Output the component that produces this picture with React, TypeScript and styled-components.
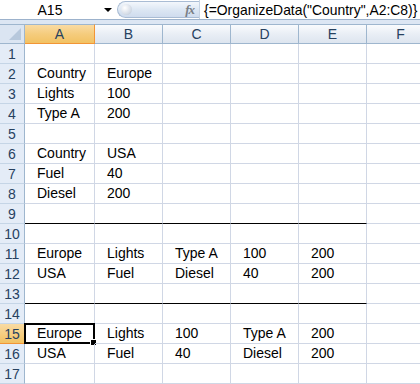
import React from "react";
import styled, { createGlobalStyle, css } from "styled-components";

const GlobalStyle = createGlobalStyle`
  html, body { margin: 0; padding: 0; background: #ffffff; }
  body { font-family: "Liberation Sans", Arial, sans-serif; }
`;

const Sheet = styled.div`
  width: 420px;
  height: 384px;
  overflow: hidden;
  background: #ffffff;
  display: flex;
  flex-direction: column;
`;

const FormulaBar = styled.div`
  display: flex;
  align-items: center;
  height: 19px;
  flex: none;
  background: #ffffff;
  border-bottom: 1px solid #9cb2cc;
`;

const NameBox = styled.div`
  width: 117px;
  height: 19px;
  flex: none;
  display: flex;
  align-items: center;
  font-size: 14px;
  color: #000;
`;

const NameText = styled.span`
  width: 100px;
  text-align: center;
  padding-right: 2px;
`;

const DropArrow = styled.span`
  width: 0;
  height: 0;
  border-left: 4px solid transparent;
  border-right: 4px solid transparent;
  border-top: 4px solid #000;
  margin-left: 2px;
`;

const FxButton = styled.div`
  width: 82px;
  height: 17px;
  flex: none;
  box-sizing: border-box;
  border: 1px solid #a9bcd4;
  border-right: none;
  border-radius: 9px 0 0 9px;
  background: linear-gradient(#f3f7fc, #dbe6f3 55%, #cfdcee);
  display: flex;
  align-items: center;
  justify-content: space-between;
  padding: 0 5px 0 3px;
`;

const Knob = styled.span`
  width: 11px;
  height: 11px;
  border-radius: 50%;
  background: radial-gradient(circle at 35% 35%, #ffffff, #d7dee8 60%, #b7c3d2);
`;

const Fx = styled.span`
  font-family: "Liberation Serif", serif;
  font-style: italic;
  font-weight: bold;
  font-size: 13px;
  color: #7a7f86;
  letter-spacing: -1px;
`;

const FormulaText = styled.div`
  flex: 1;
  height: 19px;
  display: flex;
  align-items: center;
  padding-left: 4px;
  border-left: 1px solid #c6d3e3;
  font-size: 13.9px;
  color: #000;
  white-space: nowrap;
`;

const Band = styled.div`
  height: 4px;
  flex: none;
  background: #dce6f3;
`;

const Grid = styled.div`
  display: grid;
  grid-template-columns: 25px 70px 68px 68px 68px 68px 68px;
  grid-auto-rows: 20px;
`;

const Corner = styled.div`
  box-sizing: border-box;
  border-right: 1px solid #9eb6ce;
  border-bottom: 1px solid #9eb6ce;
  border-top: 1px solid #9eb6ce;
  background: #dbe5f2;
  position: relative;
  &::after {
    content: "";
    position: absolute;
    right: 3px;
    bottom: 3px;
    width: 0;
    height: 0;
    border-left: 12px solid transparent;
    border-bottom: 12px solid #b7c8dc;
  }
`;

const ColHeader = styled.div<{ $active?: boolean }>`
  box-sizing: border-box;
  border-top: 1px solid #9eb6ce;
  border-right: 1px solid #9eb6ce;
  border-bottom: 1px solid #9eb6ce;
  background: linear-gradient(#f9fbfd, #e9eef5 50%, #dde5ef);
  display: flex;
  align-items: center;
  justify-content: center;
  font-size: 14px;
  color: #27415f;
  ${(p) =>
    p.$active &&
    css`
      background: linear-gradient(#f9dba3, #f5cc7d 50%, #f2c263);
      border-right-color: #f29536;
      border-bottom-color: #f29536;
    `}
`;

const RowHeader = styled.div<{ $active?: boolean }>`
  box-sizing: border-box;
  border-right: 1px solid #9eb6ce;
  border-bottom: 1px solid #c5d5e6;
  background: #e4ecf7;
  display: flex;
  align-items: center;
  justify-content: center;
  font-size: 14px;
  color: #27415f;
  ${(p) =>
    p.$active &&
    css`
      background: linear-gradient(#f9dba3, #f2c263);
      border-right-color: #f29536;
      border-bottom-color: #f29536;
    `}
`;

const Cell = styled.div<{ $rule?: boolean }>`
  box-sizing: border-box;
  border-right: 1px solid #d0d7e5;
  border-bottom: 1px solid ${(p) => (p.$rule ? "#000000" : "#d0d7e5")};
  padding: 0 0 2px 12px;
  display: flex;
  align-items: flex-end;
  font-size: 14px;
  color: #000;
  white-space: nowrap;
  position: relative;
`;

const Selection = styled.div`
  position: absolute;
  left: -1px;
  top: -1px;
  right: -1px;
  bottom: -1px;
  border: 2px solid #000;
  pointer-events: none;
  &::after {
    content: "";
    position: absolute;
    right: -4px;
    bottom: -4px;
    width: 5px;
    height: 5px;
    background: #000;
    border: 1px solid #fff;
  }
`;

const cols = ["A", "B", "C", "D", "E", "F"];

const data: Record<number, string[]> = {
  2: ["Country", "Europe"],
  3: ["Lights", "100"],
  4: ["Type A", "200"],
  6: ["Country", "USA"],
  7: ["Fuel", "40"],
  8: ["Diesel", "200"],
  11: ["Europe", "Lights", "Type A", "100", "200"],
  12: ["USA", "Fuel", "Diesel", "40", "200"],
  15: ["Europe", "Lights", "100", "Type A", "200"],
  16: ["USA", "Fuel", "40", "Diesel", "200"],
};

const ruledRows = [9, 13];

export default function App() {
  const rows = Array.from({ length: 17 }, (_, i) => i + 1);
  return (
    <>
      <GlobalStyle />
      <Sheet>
        <FormulaBar>
          <NameBox>
            <NameText>A15</NameText>
            <DropArrow />
          </NameBox>
          <FxButton>
            <Knob />
            <Fx>fx</Fx>
          </FxButton>
          <FormulaText>{'{=OrganizeData("Country",A2:C8)}'}</FormulaText>
        </FormulaBar>
        <Band />
        <Grid>
          <Corner />
          {cols.map((c) => (
            <ColHeader key={c} $active={c === "A"}>
              {c}
            </ColHeader>
          ))}
          {rows.map((r) => (
            <React.Fragment key={r}>
              <RowHeader $active={r === 15}>{r}</RowHeader>
              {cols.map((c, ci) => (
                <Cell key={c} $rule={ruledRows.includes(r) && ci < 5}>
                  {data[r]?.[ci] ?? ""}
                  {r === 15 && ci === 0 && <Selection />}
                </Cell>
              ))}
            </React.Fragment>
          ))}
        </Grid>
      </Sheet>
    </>
  );
}
